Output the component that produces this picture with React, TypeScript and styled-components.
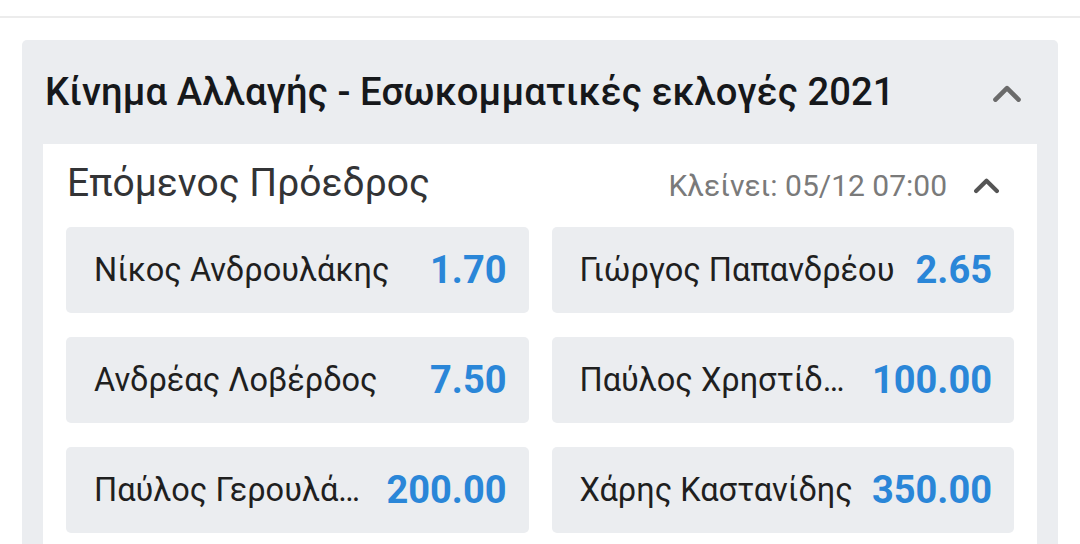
import React from 'react';
import styled, { createGlobalStyle } from 'styled-components';

const GlobalStyle = createGlobalStyle`
  html, body {
    margin: 0;
    padding: 0;
    background: #ffffff;
    font-family: Roboto, "Noto Sans", "DejaVu Sans", sans-serif;
    overflow: hidden;
  }
`;

interface Selection {
  name: string;
  odds: string;
}

const selections: Selection[] = [
  { name: 'Νίκος Ανδρουλάκης', odds: '1.70' },
  { name: 'Γιώργος Παπανδρέου', odds: '2.65' },
  { name: 'Ανδρέας Λοβέρδος', odds: '7.50' },
  { name: 'Παύλος Χρηστίδης', odds: '100.00' },
  { name: 'Παύλος Γερουλάνος', odds: '200.00' },
  { name: 'Χάρης Καστανίδης', odds: '350.00' },
];

const Chevron = ({ size, color }: { size: number; color: string }) => (
  <svg width={size} height={size * 0.62} viewBox="0 0 26 16" fill="none">
    <path
      d="M3 13.5 L13 3.5 L23 13.5"
      stroke={color}
      strokeWidth="4"
      strokeLinecap="round"
      strokeLinejoin="round"
    />
  </svg>
);

const App = () => {
  return (
    <Page>
      <GlobalStyle />
      <TopBar />
      <EventCard>
        <EventHeader>
          <EventTitle>Κίνημα Αλλαγής - Εσωκομματικές εκλογές 2021</EventTitle>
          <ToggleButton>
            <Chevron size={30} color="#6b6b6b" />
          </ToggleButton>
        </EventHeader>
        <MarketCard>
          <MarketHeader>
            <MarketTitle>Επόμενος Πρόεδρος</MarketTitle>
            <MarketMeta>
              <Closes>Κλείνει: 05/12 07:00</Closes>
              <Chevron size={27} color="#555555" />
            </MarketMeta>
          </MarketHeader>
          <OddsGrid>
            {selections.map((s) => (
              <OddsButton key={s.name}>
                <Name title={s.name}>{s.name}</Name>
                <Price>{s.odds}</Price>
              </OddsButton>
            ))}
          </OddsGrid>
        </MarketCard>
      </EventCard>
    </Page>
  );
};

export default App;

const Page = styled.div`
  width: 1080px;
  height: 544px;
  background: #ffffff;
  overflow: hidden;
`;

const TopBar = styled.div`
  height: 16px;
  border-bottom: 2px solid #ececec;
`;

const EventCard = styled.section`
  margin: 22px 22px 0;
  background: #ebedf0;
  border-radius: 5px 5px 0 0;
  padding: 0 21px;
`;

const EventHeader = styled.div`
  height: 104px;
  display: flex;
  align-items: center;
  justify-content: space-between;
  padding: 0 2px 0 2px;
`;

const EventTitle = styled.h2`
  margin: 0;
  font-size: 38.2px;
  font-weight: 500;
  color: #16181b;
  letter-spacing: 0.1px;
`;

const ToggleButton = styled.div`
  display: flex;
  align-items: center;
  padding-right: 13px;
  padding-top: 2px;
`;

const MarketCard = styled.div`
  background: #ffffff;
  padding: 0 23px 24px;
`;

const MarketHeader = styled.div`
  height: 83px;
  display: flex;
  align-items: center;
  justify-content: space-between;
`;

const MarketTitle = styled.h3`
  margin: 0;
  font-size: 39px;
  font-weight: 400;
  color: #333436;
  padding-left: 1px;
  padding-bottom: 6px;
`;

const MarketMeta = styled.div`
  display: flex;
  align-items: center;
  gap: 26px;
  padding-right: 14px;
`;

const Closes = styled.span`
  font-size: 30px;
  color: #7a7a7a;
`;

const OddsGrid = styled.div`
  display: grid;
  grid-template-columns: 1fr 1fr;
  column-gap: 23px;
  row-gap: 24px;
`;

const OddsButton = styled.div`
  height: 86px;
  background: #ebedf0;
  border-radius: 5px;
  display: flex;
  align-items: center;
  justify-content: space-between;
  padding: 0 22px 0 28px;
  gap: 19px;
  min-width: 0;
`;

const Name = styled.span`
  font-size: 32.5px;
  color: #1f1f1f;
  white-space: nowrap;
  overflow: hidden;
  text-overflow: ellipsis;
  min-width: 0;
`;

const Price = styled.span`
  font-size: 38px;
  font-weight: 700;
  color: #2a86d8;
  flex-shrink: 0;
`;
